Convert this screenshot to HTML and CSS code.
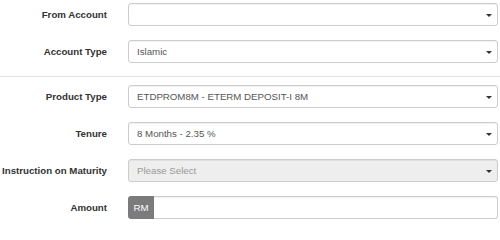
FILE: index.html
```html
<!DOCTYPE html>
<html>
<head>
<meta charset="utf-8">
<link rel="stylesheet" href="styles.css">
</head>
<body>
<form class="form">
  <div class="row">
    <label class="label">From Account</label>
    <div class="control select"><span class="value"></span><span class="caret"></span></div>
  </div>
  <div class="row">
    <label class="label">Account Type</label>
    <div class="control select"><span class="value">Islamic</span><span class="caret"></span></div>
  </div>
  <hr class="sep">
  <div class="row">
    <label class="label">Product Type</label>
    <div class="control select"><span class="value">ETDPROM8M - ETERM DEPOSIT-I 8M</span><span class="caret"></span></div>
  </div>
  <div class="row">
    <label class="label">Tenure</label>
    <div class="control select"><span class="value">8 Months - 2.35 %</span><span class="caret"></span></div>
  </div>
  <div class="row">
    <label class="label">Instruction on Maturity</label>
    <div class="control select disabled"><span class="value placeholder">Please Select</span><span class="caret"></span></div>
  </div>
  <div class="row">
    <label class="label">Amount</label>
    <div class="group">
      <span class="addon">RM</span>
      <div class="control input"></div>
    </div>
  </div>
</form>
</body>
</html>
```
FILE: styles.css
```css
html, body {
  margin: 0;
  padding: 0;
  background: #fff;
}
body {
  font-family: "Liberation Sans", Arial, sans-serif;
  font-size: 9.7px;
  color: #333;
}
.form {
  padding-top: 3px;
  width: 498px;
}
.row {
  display: flex;
  align-items: center;
  height: 23px;
  margin-bottom: 14px;
}
.label {
  width: 107px;
  flex: none;
  text-align: right;
  font-weight: bold;
  color: #333;
  margin-right: 21px;
  white-space: nowrap;
}
.control {
  box-sizing: border-box;
  height: 23px;
  border: 1px solid #ccc;
  border-radius: 3px;
  background: #fff;
  box-shadow: inset 0 1px 1px rgba(0,0,0,0.06);
  color: #555;
}
.select {
  flex: 1;
  display: flex;
  align-items: center;
  justify-content: space-between;
  padding: 0 5px 0 8px;
}
.disabled {
  background: #eee;
}
.placeholder {
  color: #999;
}
.caret {
  width: 0;
  height: 0;
  border-left: 3px solid transparent;
  border-right: 3px solid transparent;
  border-top: 3px solid #333;
  margin-top: 1px;
}
.sep {
  border: 0;
  border-top: 1px solid #e3e3e3;
  margin: -1px 0 8px 0;
  height: 0;
  width: 500px;
}
.group {
  flex: 1;
  display: flex;
  height: 23px;
}
.addon {
  width: 26px;
  flex: none;
  box-sizing: border-box;
  background: #7b7b7b;
  color: #fff;
  border-radius: 3px 0 0 3px;
  display: flex;
  align-items: center;
  justify-content: center;
}
.input {
  flex: 1;
  border-left: 0;
  border-radius: 0 3px 3px 0;
}
```
